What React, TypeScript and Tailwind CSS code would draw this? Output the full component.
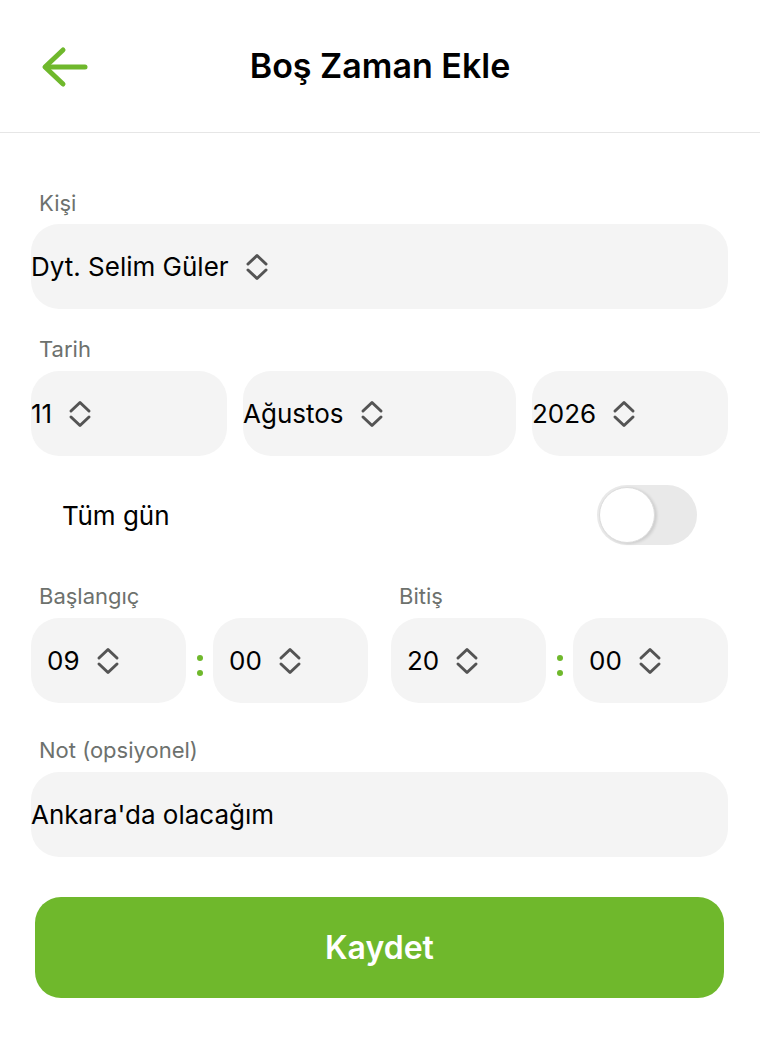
import React from "react";

const Chevrons = () => (
  <svg width="24" height="30" viewBox="0 0 24 30" fill="none" className="shrink-0">
    <path d="M3 12 L12 3.5 L21 12" stroke="#545454" strokeWidth="3" strokeLinecap="round" strokeLinejoin="round" />
    <path d="M3 18 L12 26.5 L21 18" stroke="#545454" strokeWidth="3" strokeLinecap="round" strokeLinejoin="round" />
  </svg>
);

const Label = ({ children, className = "" }: { children: React.ReactNode; className?: string }) => (
  <div className={`h-[28px] leading-[28px] text-[22px] text-[#6d716d] pl-[8px] ${className}`}>{children}</div>
);

const Select = ({ value, className = "", pad = false }: { value: string; className?: string; pad?: boolean }) => (
  <div className={`h-[85px] rounded-[28px] bg-[#f4f4f4] flex items-center gap-[16px] ${pad ? "pl-[16px]" : ""} ${className}`}>
    <span className="text-[26px] text-black leading-none">{value}</span>
    <Chevrons />
  </div>
);

const TimePair = ({ label, h, m }: { label: string; h: string; m: string }) => (
  <div className="flex-1 flex flex-col">
    <Label>{label}</Label>
    <div className="mt-[8px] flex items-center">
      <Select value={h} pad className="flex-1" />
      <div className="w-[27px] flex flex-col items-center gap-[9px] pt-[10px]">
        <span className="w-[6px] h-[6px] rounded-full bg-[#6fb82c]" />
        <span className="w-[6px] h-[6px] rounded-full bg-[#6fb82c]" />
      </div>
      <Select value={m} pad className="flex-1" />
    </div>
  </div>
);

export default function App() {
  return (
    <div className="w-[760px] min-h-[1048px] bg-white" style={{ fontFamily: "Inter, 'Noto Sans', sans-serif" }}>
      <header className="h-[133px] border-b border-[#e6e6e6] relative flex items-center justify-center">
        <svg className="absolute left-[40px] top-[45px]" width="50" height="44" viewBox="0 0 50 44" fill="none">
          <path d="M45 22 H6" stroke="#6fb82c" strokeWidth="5" strokeLinecap="round" />
          <path d="M23 5 L5 22 L23 39" stroke="#6fb82c" strokeWidth="5" strokeLinecap="round" strokeLinejoin="round" />
        </svg>
        <h1 className="text-[34px] font-semibold text-black -mt-[1px]">Boş Zaman Ekle</h1>
      </header>

      <main className="px-[31px] pr-[32px] flex flex-col">
        <Label className="mt-[56px]">Kişi</Label>
        <Select value="Dyt. Selim Güler" className="mt-[7px]" />

        <Label className="mt-[26px]">Tarih</Label>
        <div className="mt-[8px] flex gap-[16px]">
          <Select value="11" className="flex-[196]" />
          <Select value="Ağustos" className="flex-[273]" />
          <Select value="2026" className="flex-[196]" />
        </div>

        <div className="mt-[29px] h-[60px] flex items-center justify-between pl-[31px] pr-[31px]">
          <span className="text-[26px] text-black">Tüm gün</span>
          <div className="w-[100px] h-[60px] rounded-full bg-[#e9e9e9] p-[2px] flex items-center">
            <div className="w-[56px] h-[56px] rounded-full bg-white border border-[#dcdcdc] shadow-[2px_1px_3px_rgba(0,0,0,0.12)]" />
          </div>
        </div>

        <div className="mt-[37px] flex gap-[23px]">
          <TimePair label="Başlangıç" h="09" m="00" />
          <TimePair label="Bitiş" h="20" m="00" />
        </div>

        <Label className="mt-[33px]">Not (opsiyonel)</Label>
        <Select value="Ankara'da olacağım" className="mt-[8px] [&>svg]:hidden" />

        <button className="mt-[40px] mx-[4px] h-[101px] rounded-[26px] bg-[#6fb82c] text-white text-[32px] font-semibold">
          Kaydet
        </button>
      </main>
    </div>
  );
}
